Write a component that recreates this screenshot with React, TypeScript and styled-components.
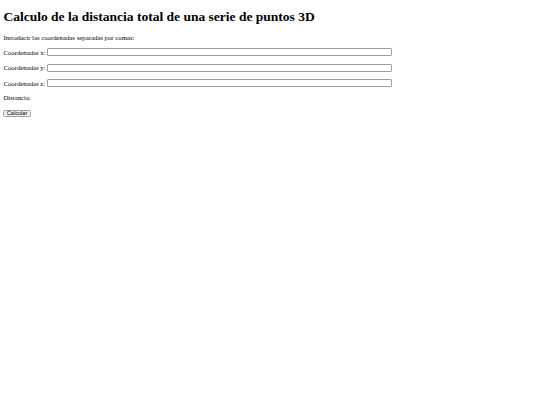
import React, { useState } from 'react';
import styled, { createGlobalStyle } from 'styled-components';

const GlobalStyle = createGlobalStyle`
  body {
    margin: 0;
    background: #ffffff;
    color: #000000;
    font-family: "Liberation Serif", "Times New Roman", serif;
  }
`;

const Page = styled.div`
  padding: 0 3.4px;
  font-size: 6.75px;
  overflow: hidden;
`;

const Title = styled.h1`
  font-size: 13.5px;
  font-weight: bold;
  margin: 8.6px 0 9.3px;
`;

const Text = styled.p`
  font-size: 6.75px;
  margin: 6.75px 0;
`;

const Row = styled.div`
  font-size: 6.75px;
  margin: 6.75px 0;
  height: 8.8px;
  display: flex;
  align-items: center;
  gap: 1.7px;
`;

const Field = styled.input`
  box-sizing: border-box;
  width: 345px;
  height: 8px;
  padding: 0;
  margin: 0;
  border: 1px solid #a0a0a0;
  border-radius: 1px;
  font-size: 5.6px;
  background: #fff;
`;

const Button = styled.button`
  display: block;
  box-sizing: border-box;
  font-family: "Liberation Sans", Arial, sans-serif;
  font-size: 5.6px;
  padding: 0 2.4px;
  height: 7.6px;
  line-height: 1;
  margin: 8.5px 0 0;
  border: 1px solid #a0a0a0;
  border-radius: 1.5px;
  background: #efefef;
  color: #000;
`;

function distance(xs: string, ys: string, zs: string) {
  const parse = (s: string) => s.split(',').map(v => parseFloat(v)).filter(v => !isNaN(v));
  const x = parse(xs), y = parse(ys), z = parse(zs);
  const n = Math.min(x.length, y.length, z.length);
  let total = 0;
  for (let i = 1; i < n; i++) {
    total += Math.sqrt((x[i] - x[i - 1]) ** 2 + (y[i] - y[i - 1]) ** 2 + (z[i] - z[i - 1]) ** 2);
  }
  return total;
}

export default function App() {
  const [x, setX] = useState('');
  const [y, setY] = useState('');
  const [z, setZ] = useState('');
  const [result, setResult] = useState<string>('');

  return (
    <Page>
      <GlobalStyle />
      <Title>Calculo de la distancia total de una serie de puntos 3D</Title>
      <Text>Introducir las coordenadas separadas por comas:</Text>
      <Row>Coordenadas x: <Field type="text" value={x} onChange={e => setX(e.target.value)} /></Row>
      <Row>Coordenadas y: <Field type="text" value={y} onChange={e => setY(e.target.value)} /></Row>
      <Row>Coordenadas z: <Field type="text" value={z} onChange={e => setZ(e.target.value)} /></Row>
      <Text>Distancia: {result}</Text>
      <Button onClick={() => setResult(distance(x, y, z).toFixed(2))}>Calcular</Button>
    </Page>
  );
}
